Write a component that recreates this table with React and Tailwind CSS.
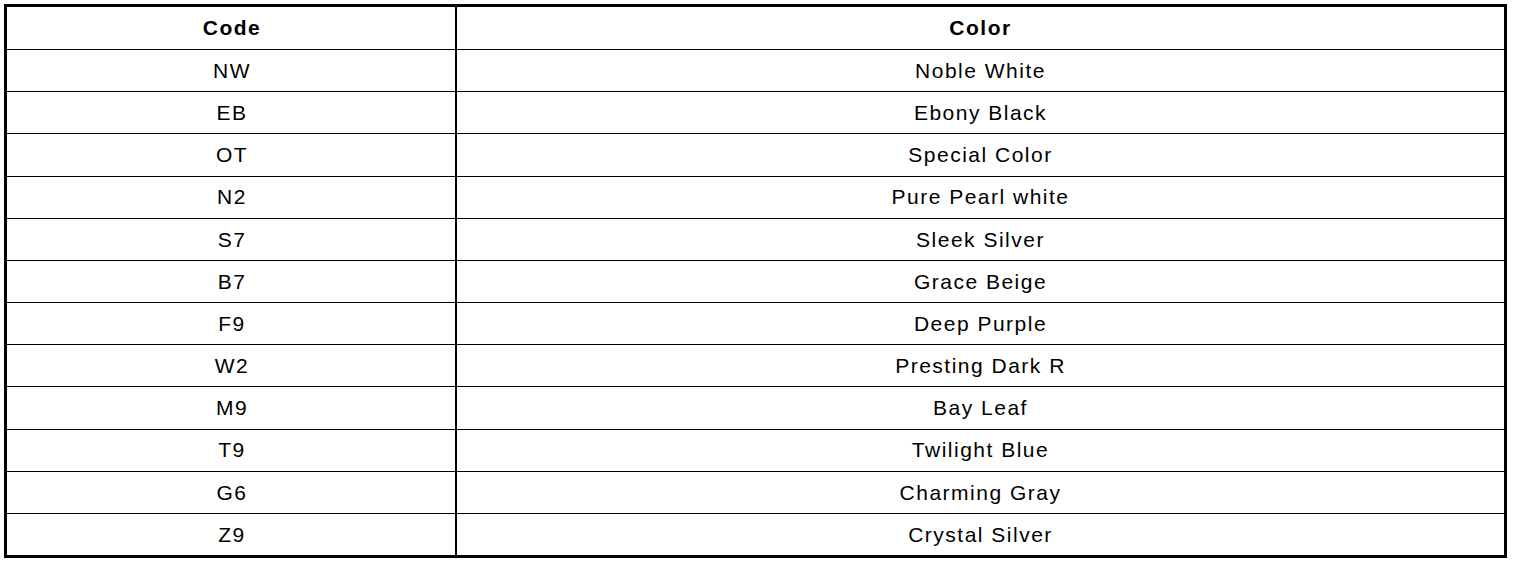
const rows = [
  ["NW", "Noble White"],
  ["EB", "Ebony Black"],
  ["OT", "Special Color"],
  ["N2", "Pure Pearl white"],
  ["S7", "Sleek Silver"],
  ["B7", "Grace Beige"],
  ["F9", "Deep Purple"],
  ["W2", "Presting Dark R"],
  ["M9", "Bay Leaf"],
  ["T9", "Twilight Blue"],
  ["G6", "Charming Gray"],
  ["Z9", "Crystal Silver"],
];

export default function App() {
  return (
    <div className="w-[1520px] h-[564px] bg-white pt-[4px] pl-[4px] font-['Liberation_Sans',Arial,sans-serif] text-black">
      <div className="w-[1503px] h-[554px] border-[3px] border-black grid grid-cols-[450px_1fr] grid-rows-13 text-[21px] tracking-[1.5px]">
        {/* header */}
        <div className="flex items-center justify-center pl-[2px] font-bold border-r-2 border-black">
          Code
        </div>
        <div className="flex items-center justify-center font-bold">Color</div>

        {rows.map(([code, color]) => (
          <div key={code} className="contents">
            <div className="flex items-center justify-center pl-[2px] border-t border-r-2 border-black">
              {code}
            </div>
            <div className="flex items-center justify-center border-t border-black">
              {color}
            </div>
          </div>
        ))}
      </div>
    </div>
  );
}
